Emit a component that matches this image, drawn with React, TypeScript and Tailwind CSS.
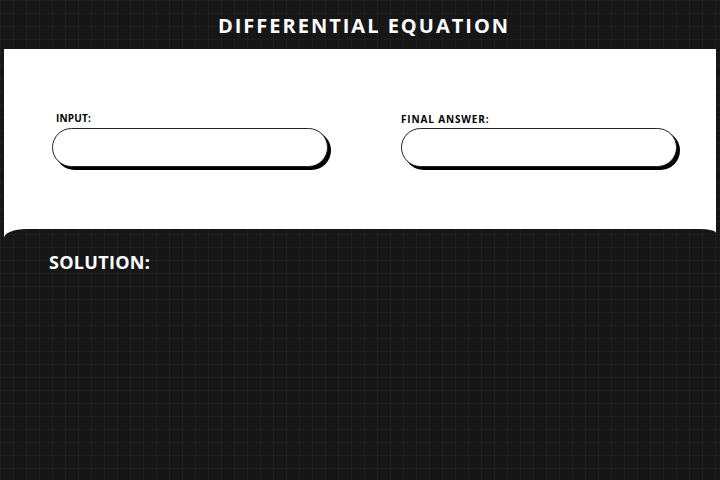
import React from "react";

const grid =
  "bg-[#161616] bg-[linear-gradient(to_right,rgba(255,255,255,0.03)_1px,transparent_1px),linear-gradient(to_bottom,rgba(255,255,255,0.03)_1px,transparent_1px)] bg-[size:13px_13px] bg-fixed";

function Field({ label, labelClass }: { label: string; labelClass?: string }) {
  return (
    <div className="flex flex-col w-[276px]">
      <div
        className={`text-[10px] leading-[12px] font-bold text-black ${labelClass ?? ""}`}
      >
        {label}
      </div>
      <div className="mt-[4px] h-[39px] w-[276px] rounded-full border border-[#222] bg-white shadow-[3px_3px_0_#000]" />
    </div>
  );
}

export default function App() {
  return (
    <div
      className={`min-h-[480px] w-full ${grid} font-['Open_Sans',sans-serif]`}
    >
      <div className="h-[49px] flex items-center justify-center">
        <h1 className="text-white font-bold text-[20px] leading-none tracking-[2px] pt-[2px] pl-[8px]">
          DIFFERENTIAL EQUATION
        </h1>
      </div>
      <div className="mx-[4px] h-[190px] bg-white pt-[63px] pl-[48px] flex gap-[73px]">
        <Field label="INPUT:" labelClass="pl-[4px] tracking-[0.2px]" />
        <Field label="FINAL ANSWER:" labelClass="mt-[1px] -mb-[1px] tracking-[0.85px]" />
      </div>
      <div
        className={`mx-[4px] -mt-[10px] h-[251px] rounded-tl-[22px_9px] rounded-tr-[16px_4px] ${grid} pt-[22px] pl-[45px]`}
      >
        <h2 className="text-white font-bold text-[18px] leading-[22px] tracking-[0.3px]">
          SOLUTION:
        </h2>
      </div>
    </div>
  );
}
